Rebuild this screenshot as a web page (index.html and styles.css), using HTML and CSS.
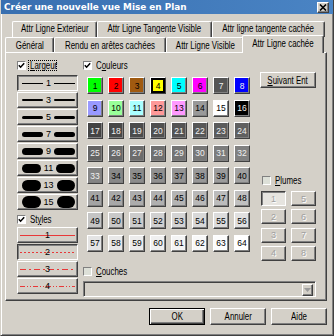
FILE: index.html
```html
<!DOCTYPE html>
<html lang="fr">
<head>
<meta charset="utf-8">
<title>Créer une nouvelle vue Mise en Plan</title>
<link rel="stylesheet" href="styles.css">
</head>
<body>
<div class="win">
  <div class="title">
    <span class="ttl">Créer une nouvelle vue Mise en Plan</span>
    <span class="close"><svg width="8" height="7" viewBox="0 0 8 7"><path d="M1 0.5 L7 6.5 M7 0.5 L1 6.5" stroke="#000" stroke-width="1.6"/></svg></span>
  </div>
  <div class="tabs">
    <div class="trow r1">
      <div class="tab t-ext"><span class="tx">Attr Ligne Exterieur</span></div>
      <div class="tab t-tv"><span class="tx">Attr Ligne Tangente Visible</span></div>
      <div class="tab t-tc"><span class="tx">Attr ligne tangente cachée</span></div>
    </div>
    <div class="trow r2">
      <div class="tab t-gen"><span class="tx">Général</span></div>
      <div class="tab t-ren"><span class="tx">Rendu en arêtes cachées</span></div>
      <div class="tab t-vis"><span class="tx">Attr Ligne Visible</span></div>
      <div class="tab t-cac sel"><span class="tx">Attr Ligne cachée</span></div>
    </div>
  </div>
  <div class="panel">
    <div class="lcol">
      <div class="cbrow"><span class="cb on"><svg width="7" height="7" viewBox="0 0 7 7"><path d="M0.8 3.2 L2.6 5.2 L6.2 1.2" stroke="#000" stroke-width="1.5" fill="none"/></svg></span><span class="focus"><span class="tx lx"><u>L</u>argeur</span></span></div>
      <div class="wlist">
        <div class="wbtn down"><i class="ln w1"></i><span class="num">1</span><i class="ln w1"></i></div>
        <div class="wbtn"><i class="ln w3"></i><span class="num">3</span><i class="ln w3"></i></div>
        <div class="wbtn"><i class="ln w5"></i><span class="num">5</span><i class="ln w5"></i></div>
        <div class="wbtn"><i class="ln w7"></i><span class="num">7</span><i class="ln w7"></i></div>
        <div class="wbtn"><i class="ln w9"></i><span class="num">9</span><i class="ln w9"></i></div>
        <div class="wbtn"><i class="ln w11"></i><span class="num">11</span><i class="ln w11"></i></div>
        <div class="wbtn"><i class="ln w13"></i><span class="num">13</span><i class="ln w13"></i></div>
        <div class="wbtn"><i class="ln w15"></i><span class="num">15</span><i class="ln w15"></i></div>
      </div>
      <div class="cbrow srow"><span class="cb on"><svg width="7" height="7" viewBox="0 0 7 7"><path d="M0.8 3.2 L2.6 5.2 L6.2 1.2" stroke="#000" stroke-width="1.5" fill="none"/></svg></span><span class="tx lx">St<u>y</u>les</span></div>
      <div class="slist">
        <div class="sbtn s1">1</div>
        <div class="sbtn s2 down">2</div>
        <div class="sbtn s3">3</div>
        <div class="sbtn s4">4</div>
      </div>
    </div>
    <div class="rarea">
      <div class="top">
        <div class="mcol">
          <div class="cbrow"><span class="cb on"><svg width="7" height="7" viewBox="0 0 7 7"><path d="M0.8 3.2 L2.6 5.2 L6.2 1.2" stroke="#000" stroke-width="1.5" fill="none"/></svg></span><span class="tx lx">C<u>o</u>uleurs</span></div>
          <div class="grid">
            <div class="cell" style="background:#00ff00">1</div>
            <div class="cell" style="background:#ff0000">2</div>
            <div class="cell" style="background:#a05a10">3</div>
            <div class="cell selc" style="background:#ffff00">4</div>
            <div class="cell" style="background:#00ffff">5</div>
            <div class="cell" style="background:#ff00ff">6</div>
            <div class="cell lt" style="background:#555555">7</div>
            <div class="cell lt" style="background:#0000ff">8</div>
            <div class="cell" style="background:#9999ff">9</div>
            <div class="cell" style="background:#99ff99">10</div>
            <div class="cell" style="background:#aaffff">11</div>
            <div class="cell" style="background:#ff9999">12</div>
            <div class="cell" style="background:#ff99ff">13</div>
            <div class="cell" style="background:#999999">14</div>
            <div class="cell" style="background:#ffffff">15</div>
            <div class="cell lt" style="background:#000000">16</div>
            <div class="cell lt" style="background:#444444">17</div>
            <div class="cell lt" style="background:#484848">18</div>
            <div class="cell lt" style="background:#4c4c4c">19</div>
            <div class="cell lt" style="background:#505050">20</div>
            <div class="cell lt" style="background:#545454">21</div>
            <div class="cell lt" style="background:#585858">22</div>
            <div class="cell lt" style="background:#5c5c5c">23</div>
            <div class="cell lt" style="background:#606060">24</div>
            <div class="cell lt" style="background:#646464">25</div>
            <div class="cell lt" style="background:#686868">26</div>
            <div class="cell lt" style="background:#6c6c6c">27</div>
            <div class="cell lt" style="background:#707070">28</div>
            <div class="cell lt" style="background:#747474">29</div>
            <div class="cell lt" style="background:#787878">30</div>
            <div class="cell lt" style="background:#7c7c7c">31</div>
            <div class="cell lt" style="background:#808080">32</div>
            <div class="cell lt" style="background:#848484">33</div>
            <div class="cell" style="background:#888888">34</div>
            <div class="cell" style="background:#8c8c8c">35</div>
            <div class="cell" style="background:#909090">36</div>
            <div class="cell" style="background:#949494">37</div>
            <div class="cell" style="background:#989898">38</div>
            <div class="cell" style="background:#9c9c9c">39</div>
            <div class="cell" style="background:#a0a0a0">40</div>
            <div class="cell" style="background:#a4a4a4">41</div>
            <div class="cell" style="background:#a8a8a8">42</div>
            <div class="cell" style="background:#acacac">43</div>
            <div class="cell" style="background:#b0b0b0">44</div>
            <div class="cell" style="background:#b4b4b4">45</div>
            <div class="cell" style="background:#b8b8b8">46</div>
            <div class="cell" style="background:#bcbcbc">47</div>
            <div class="cell" style="background:#c0c0c0">48</div>
            <div class="cell" style="background:#c4c4c4">49</div>
            <div class="cell" style="background:#c8c8c8">50</div>
            <div class="cell" style="background:#cccccc">51</div>
            <div class="cell" style="background:#d0d0d0">52</div>
            <div class="cell" style="background:#d4d4d4">53</div>
            <div class="cell" style="background:#d8d8d8">54</div>
            <div class="cell" style="background:#dcdcdc">55</div>
            <div class="cell" style="background:#e0e0e0">56</div>
            <div class="cell" style="background:#e4e4e4">57</div>
            <div class="cell" style="background:#e8e8e8">58</div>
            <div class="cell" style="background:#ececec">59</div>
            <div class="cell" style="background:#f0f0f0">60</div>
            <div class="cell" style="background:#f4f4f4">61</div>
            <div class="cell" style="background:#f8f8f8">62</div>
            <div class="cell" style="background:#fcfcfc">63</div>
            <div class="cell" style="background:#ffffff">64</div>
          </div>
        </div>
        <div class="rcol">
          <div class="btn suiv"><span class="tx"><u>S</u>uivant Ent</span></div>
          <div class="cbrow prow"><span class="cb off"></span><span class="tx lx"><u>P</u>lumes</span></div>
          <div class="pgrid">
            <div class="pbtn down">1</div>
            <div class="pbtn">5</div>
            <div class="pbtn">2</div>
            <div class="pbtn">6</div>
            <div class="pbtn">3</div>
            <div class="pbtn">7</div>
            <div class="pbtn">4</div>
            <div class="pbtn">8</div>
          </div>
        </div>
      </div>
      <div class="cbrow crow"><span class="cb off"></span><span class="tx lx"><u>C</u>ouches</span></div>
      <div class="combo">
        <span class="cfield"></span>
        <span class="cdrop"><svg width="7" height="4" viewBox="0 0 7 4"><path d="M0 0 H7 L3.5 4 Z" fill="#9a9a9a"/></svg></span>
      </div>
    </div>
  </div>
  <div class="btnrow">
    <div class="btn pb def"><span class="tx">OK</span></div>
    <div class="btn pb"><span class="tx">Annuler</span></div>
    <div class="btn pb"><span class="tx">Aide</span></div>
  </div>
</div>
</body>
</html>
```
FILE: styles.css
```css
html, body {
  margin: 0;
  padding: 0;
  background: #d4d0c8;
}

.win {
  box-sizing: border-box;
  width: 334px;
  height: 336px;
  background: #d4d0c8;
  border-left: 1px solid #d4d0c8;
  border-right: 1px solid #404040;
  border-bottom: 1px solid #404040;
  box-shadow: inset 1px 0 #ffffff, inset -1px -1px #808080;
  display: flex;
  flex-direction: column;
  font-family: "Liberation Sans", Arial, sans-serif;
  font-size: 10px;
  color: #000;
  overflow: hidden;
}

/* horizontally condensed UI text */
.tx {
  display: inline-block;
  white-space: nowrap;
  transform: scaleX(0.79);
}
.tx.lx {
  transform-origin: 0 50%;
}

/* title bar */
.title {
  height: 14px;
  flex: none;
  background: linear-gradient(to right, #386fb0, #4a84c4);
  display: flex;
  align-items: center;
  justify-content: space-between;
  padding: 0 4px 0 3px;
}
.ttl {
  font-family: "DejaVu Sans", Verdana, sans-serif;
  font-weight: bold;
  font-size: 8.9px;
  color: #ffffff;
  white-space: nowrap;
}
.close {
  box-sizing: border-box;
  width: 12px;
  height: 11px;
  background: #d4d0c8;
  border: 1px solid;
  border-color: #ffffff #404040 #404040 #ffffff;
  box-shadow: inset -1px -1px #808080;
  display: flex;
  align-items: center;
  justify-content: center;
}
.close svg { display: block; }

/* tabs */
.tabs {
  margin-top: 7px;
  height: 31px;
  flex: none;
  display: flex;
  flex-direction: column;
}
.trow {
  display: flex;
}
.r1 { height: 16px; margin-left: 11px; }
.r2 { height: 15px; margin-left: 4px; }
.tab {
  box-sizing: border-box;
  flex: none;
  border-top: 1px solid #ffffff;
  border-left: 1px solid #ffffff;
  border-right: 1px solid #404040;
  box-shadow: inset -1px 0 #808080;
  border-radius: 2px 2px 0 0;
  display: flex;
  align-items: center;
  justify-content: center;
  white-space: nowrap;
  background: #d4d0c8;
}
.r1 .tab { padding-bottom: 2px; }
.t-ext { width: 85px; }
.t-tv { width: 115px; }
.t-tc { width: 113px; }
.t-gen { width: 49px; }
.t-ren { width: 112px; }
.t-vis { width: 78px; }
.t-cac { width: 78px; }
.tab.sel {
  position: relative;
  z-index: 2;
  height: 18px;
  margin: -2px -2px 0 -2px;
  width: 82px;
  padding-bottom: 3px;
}

/* panel */
.panel {
  box-sizing: border-box;
  width: 322px;
  height: 249px;
  flex: none;
  margin-left: 4px;
  border-top: 1px solid #ffffff;
  border-left: 1px solid #ffffff;
  border-right: 1px solid #404040;
  border-bottom: 1px solid #404040;
  box-shadow: inset -1px -1px #808080;
  padding-top: 7px;
  display: flex;
}

.cbrow {
  height: 11px;
  display: flex;
  align-items: center;
  gap: 4px;
  white-space: nowrap;
}
.cb {
  box-sizing: border-box;
  width: 9px;
  height: 9px;
  flex: none;
  border: 1px solid;
  border-color: #808080 #ffffff #ffffff #808080;
  background: #ffffff;
  display: flex;
  align-items: center;
  justify-content: center;
}
.cb svg { display: block; }
.cb.off { background: #dde0d8; }
.focus {
  display: inline-block;
  width: 29px;
  height: 11px;
  box-sizing: border-box;
  border: 1px dotted #000;
  padding-left: 1px;
  margin-left: -2px;
  line-height: 9px;
  overflow: visible;
}

/* left column */
.lcol {
  width: 61px;
  margin-left: 11px;
  flex: none;
}
.wlist {
  margin-top: 4px;
  display: flex;
  flex-direction: column;
  gap: 1px;
}
.btn, .wbtn, .sbtn, .pbtn {
  box-sizing: border-box;
  background: #d4d0c8;
  border: 1px solid;
  border-color: #ffffff #404040 #404040 #ffffff;
  box-shadow: inset -1px -1px #808080;
}
.down {
  border-color: #404040 #ffffff #ffffff #404040;
  box-shadow: inset 1px 1px #808080;
}
.wbtn {
  height: 16px;
  display: flex;
  align-items: center;
  gap: 2px;
  padding: 0 2px 0 4px;
}
.ln {
  flex: 1;
  background: #000;
  border-radius: 8px;
}
.num {
  flex: none;
  font-size: 9px;
  line-height: 9px;
  padding: 0 1px;
}
.w1 { height: 1px; border-radius: 0; }
.w3 { height: 2px; }
.w5 { height: 3px; }
.w7 { height: 5px; }
.w9 { height: 7px; }
.w11 { height: 9px; }
.w13 { height: 11px; }
.w15 { height: 12px; }

.srow { margin-top: 4px; }
.slist {
  margin-top: 2px;
  display: flex;
  flex-direction: column;
  gap: 1px;
}
.sbtn {
  height: 16px;
  display: flex;
  align-items: center;
  justify-content: center;
  font-size: 9px;
  background-repeat: no-repeat;
  background-position: center;
  background-size: 55px 1px;
}
.s1 { background-image: linear-gradient(#e83838, #e83838); }
.s2 { background-image: repeating-linear-gradient(90deg, #e83838 0 2px, transparent 2px 4px); }
.s3 { background-image: repeating-linear-gradient(90deg, #e83838 0 6px, transparent 6px 9px, #e83838 9px 11px, transparent 11px 14px); }
.s4 { background-image: repeating-linear-gradient(90deg, #e83838 0 5px, transparent 5px 7px, #e83838 7px 8px, transparent 8px 10px, #e83838 10px 11px, transparent 11px 13px); }

/* right area */
.rarea {
  margin-left: 5px;
  width: 233px;
  flex: none;
  display: flex;
  flex-direction: column;
}
.top {
  display: flex;
  align-items: flex-start;
}
.mcol {
  width: 168px;
  flex: none;
}
.grid {
  margin-top: 6px;
  margin-left: 4px;
  display: grid;
  grid-template-columns: repeat(8, 16px);
  grid-auto-rows: 17px;
  column-gap: 5px;
  row-gap: 5.5px;
}
.cell {
  box-sizing: border-box;
  border: 1px solid;
  border-color: #ffffff #404040 #404040 #ffffff;
  box-shadow: inset -1px -1px #808080;
  display: flex;
  align-items: center;
  justify-content: center;
  font-size: 8.5px;
  color: #000;
}
.cell.lt { color: #f0f0f0; }
.cell.selc { box-shadow: inset 0 0 0 2px #000; }

.rcol {
  margin-left: 9px;
  width: 56px;
  flex: none;
}
.suiv {
  margin-top: 12px;
  height: 16px;
  display: flex;
  align-items: center;
  justify-content: center;
  white-space: nowrap;
}
.prow { margin-top: 87px; margin-left: 2px; }
.pgrid {
  margin-top: 5px;
  margin-left: 1px;
  display: grid;
  grid-template-columns: 25px 25px;
  grid-auto-rows: 15px;
  column-gap: 5px;
  row-gap: 3.3px;
}
.pbtn {
  display: flex;
  align-items: center;
  justify-content: center;
  color: #a0a0a0;
  text-shadow: 1px 1px #ffffff;
  font-size: 9px;
}
.pbtn.down { background: #e6e4df; }

.crow { margin-top: 5px; }
.combo {
  margin-top: 4px;
  box-sizing: border-box;
  height: 16px;
  width: 233px;
  border: 1px solid;
  border-color: #808080 #ffffff #ffffff #808080;
  box-shadow: inset 1px 1px #404040, inset -1px -1px #d4d0c8;
  display: flex;
  justify-content: flex-end;
  padding: 2px;
}
.cfield { flex: 1; }
.cdrop {
  box-sizing: border-box;
  width: 11px;
  height: 12px;
  background: #d4d0c8;
  border: 1px solid;
  border-color: #ffffff #404040 #404040 #ffffff;
  box-shadow: inset -1px -1px #808080;
  display: flex;
  align-items: center;
  justify-content: center;
}
.cdrop svg { display: block; }

/* bottom buttons */
.btnrow {
  margin-top: 7px;
  margin-right: 6px;
  display: flex;
  justify-content: flex-end;
  gap: 5px;
}
.pb {
  width: 56px;
  height: 17px;
  display: flex;
  align-items: center;
  justify-content: center;
}
.pb.def {
  border-color: #000;
  box-shadow: inset 1px 1px #ffffff, inset -1px -1px #404040, inset -2px -2px #808080;
}
```
